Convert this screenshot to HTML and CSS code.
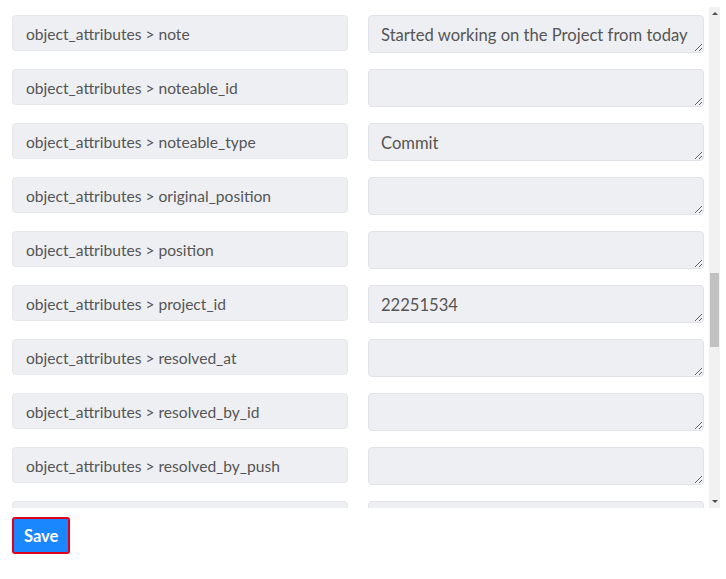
FILE: index.html
```html
<!DOCTYPE html>
<html lang="en">
<head>
    <meta charset="UTF-8">
    <meta name="viewport" content="width=device-width, initial-scale=1.0">
    <title>Field mapping</title>
    <link rel="stylesheet" href="styles.css">
</head>
<body>
    <!-- 필드 매핑 목록 (스크롤된 상태) -->
    <div class="panel">
        <div class="rows">
            <div class="row">
                <div class="key">object_attributes &gt; note</div>
                <textarea class="val" readonly>Started working on the Project from today</textarea>
            </div>
            <div class="row">
                <div class="key">object_attributes &gt; noteable_id</div>
                <textarea class="val" readonly></textarea>
            </div>
            <div class="row">
                <div class="key">object_attributes &gt; noteable_type</div>
                <textarea class="val" readonly>Commit</textarea>
            </div>
            <div class="row">
                <div class="key">object_attributes &gt; original_position</div>
                <textarea class="val" readonly></textarea>
            </div>
            <div class="row">
                <div class="key">object_attributes &gt; position</div>
                <textarea class="val" readonly></textarea>
            </div>
            <div class="row">
                <div class="key">object_attributes &gt; project_id</div>
                <textarea class="val" readonly>22251534</textarea>
            </div>
            <div class="row">
                <div class="key">object_attributes &gt; resolved_at</div>
                <textarea class="val" readonly></textarea>
            </div>
            <div class="row">
                <div class="key">object_attributes &gt; resolved_by_id</div>
                <textarea class="val" readonly></textarea>
            </div>
            <div class="row">
                <div class="key">object_attributes &gt; resolved_by_push</div>
                <textarea class="val" readonly></textarea>
            </div>
            <!-- 아래로 잘려 보이는 다음 줄 -->
            <div class="row">
                <div class="key"></div>
                <textarea class="val" readonly></textarea>
            </div>
        </div>

        <!-- 스크롤바 -->
        <div class="scrollbar">
            <span class="arrow up"></span>
            <div class="track">
                <div class="thumb"></div>
            </div>
            <span class="arrow down"></span>
        </div>
    </div>

    <div class="actions">
        <button type="button" class="save">Save</button>
    </div>
</body>
</html>
```

FILE: styles.css
```css
body {
    font-family: Lato, "Liberation Sans", sans-serif;
    background-color: #fff;
    margin: 0;
    padding: 0;
}

.panel {
    display: flex;
    height: 501px;
    margin-top: 7px;
}

.rows {
    width: 692px;
    padding: 8px 0 0 12px;
    overflow: hidden;
}

.row {
    display: grid;
    grid-template-columns: 336px 336px;
    column-gap: 20px;
    align-items: start;
    margin-bottom: 16px;
}

.key {
    box-sizing: border-box;
    height: 36px;
    padding: 0 13px;
    line-height: 36px;
    font-size: 15.6px;
    color: #555;
    background-color: #eeeff3;
    border: 1px solid #e6e7eb;
    border-radius: 4px;
    white-space: nowrap;
}

.val {
    box-sizing: border-box;
    display: block;
    width: 336px;
    height: 38px;
    margin: 0;
    padding: 9px 12px 7px;
    font-family: Lato, "Liberation Sans", sans-serif;
    font-size: 16.6px;
    line-height: 20px;
    color: #555;
    background-color: #eeeff3;
    border: 1px solid #e2e3e8;
    border-radius: 4px;
    resize: vertical;
    overflow: hidden;
    outline: none;
}

.scrollbar {
    display: flex;
    flex-direction: column;
    align-items: center;
    width: 11px;
    margin-left: 5px;
    background-color: #f1f1f1;
}

.arrow {
    width: 0;
    height: 0;
    margin: 5px 0;
    border-left: 3px solid transparent;
    border-right: 3px solid transparent;
}

.arrow.up {
    border-bottom: 3px solid #505050;
}

.arrow.down {
    border-top: 3px solid #505050;
}

.track {
    flex: 1;
    width: 100%;
    padding-top: 253px;
}

.thumb {
    width: 9px;
    height: 74px;
    margin: 0 auto;
    background-color: #c1c1c1;
}

.actions {
    padding: 9px 12px;
}

.save {
    height: 37px;
    padding: 0 10px;
    font-family: Lato, "Liberation Sans", sans-serif;
    font-size: 16.5px;
    font-weight: bold;
    color: #fff;
    background-color: #1a87ff;
    border: 2px solid #e0001b;
    border-radius: 3px;
    cursor: pointer;
}
```
